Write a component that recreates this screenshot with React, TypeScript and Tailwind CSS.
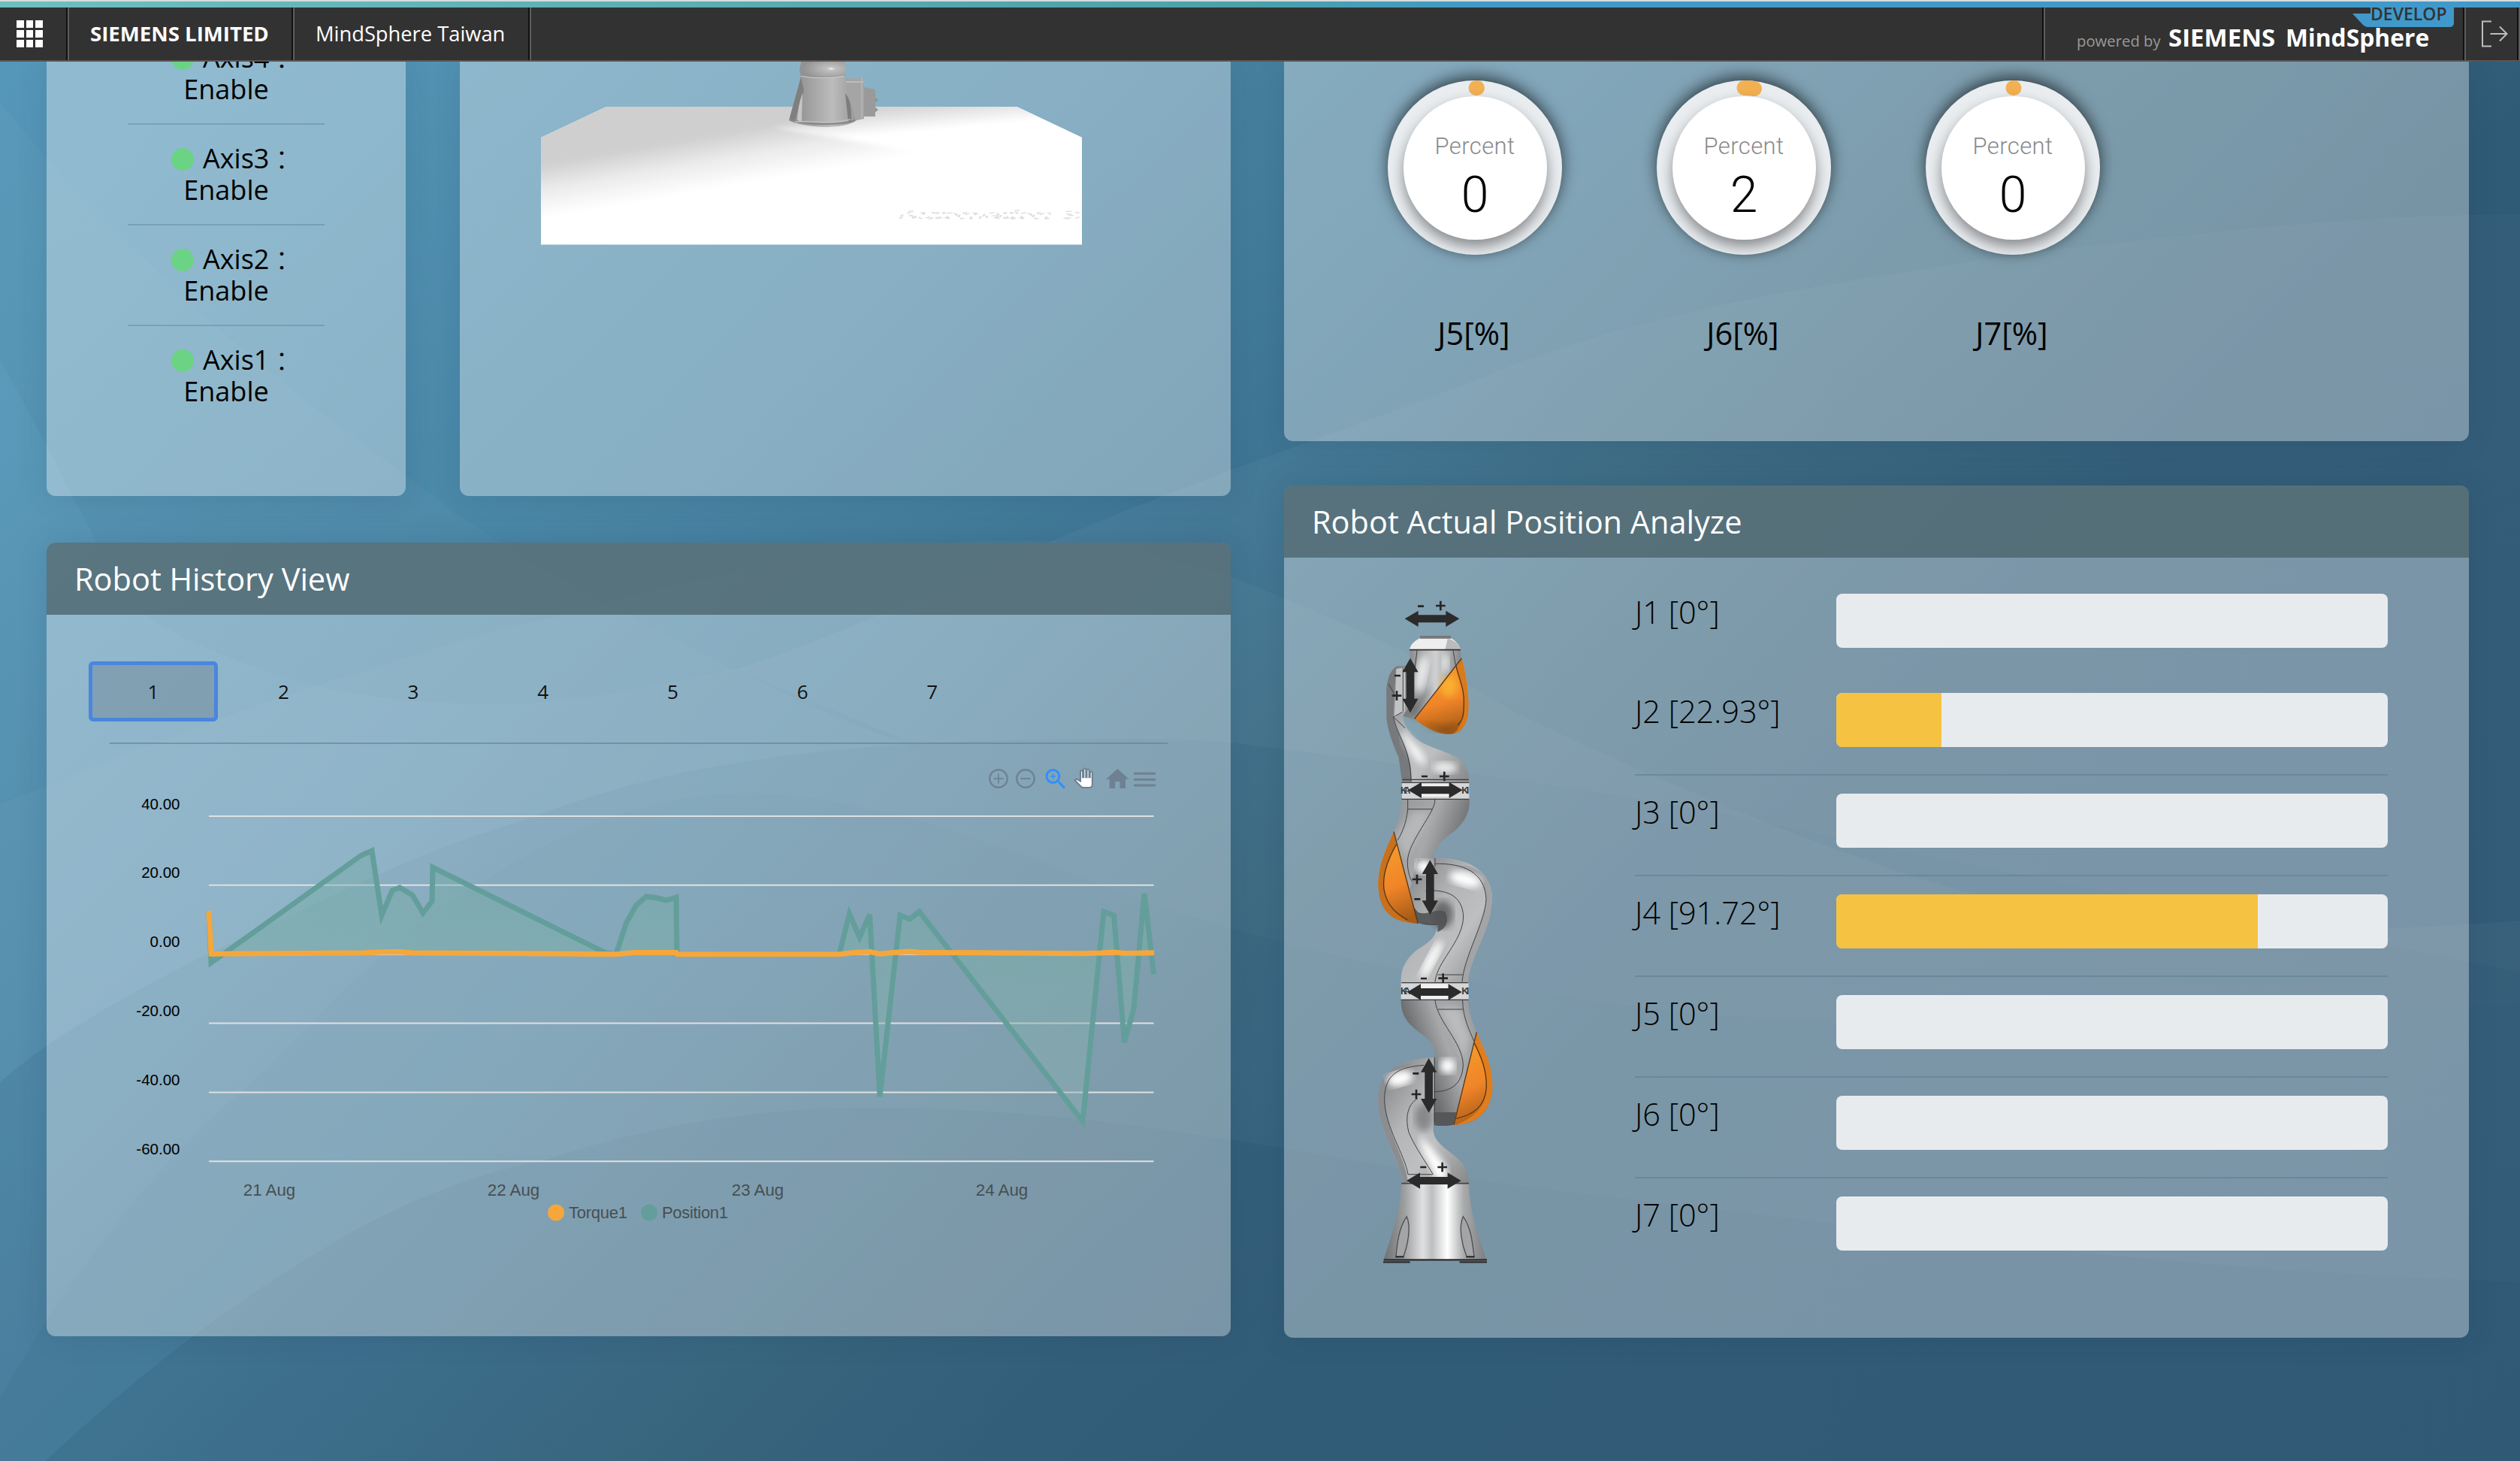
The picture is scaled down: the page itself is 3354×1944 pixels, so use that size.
import React from "react";

const SANS = "font-['Open_Sans','Noto_Sans',sans-serif]";

function Backdrop() {
  return (
    <svg className="absolute inset-0 h-full w-full" viewBox="0 0 3354 1944" preserveAspectRatio="none" aria-hidden="true">
      <defs>
        <linearGradient id="sky" gradientUnits="userSpaceOnUse" x1="0" y1="0" x2="2649" y2="2649">
          <stop offset="0" stopColor="#5b9dbf" />
          <stop offset="0.12" stopColor="#5696b7" />
          <stop offset="0.3" stopColor="#4b86a6" />
          <stop offset="0.43" stopColor="#417795" />
          <stop offset="0.55" stopColor="#38677f" />
          <stop offset="0.66" stopColor="#305b76" />
          <stop offset="1" stopColor="#2e5774" />
        </linearGradient>
      </defs>
      <rect width="3354" height="1944" fill="url(#sky)" />
      <path d="M0 480C50 560 150 780 193 818C240 850 290 870 366 897C470 930 560 937 682 937C820 930 920 900 978 890C1060 870 1300 760 1448 700C1640 620 1800 570 1979 500C2120 440 2300 400 2443 377C2600 350 2740 330 2820 323C3000 300 3200 285 3354 285V0H0Z" fill="#22607f" fillOpacity="0.08" />
      <path d="M0 135C60 215 200 360 290 436C420 550 520 615 603 680C700 750 780 790 835 818C920 860 1100 960 1233 997L1400 1052L1637 1135C1750 1170 1820 1190 1898 1209C2000 1235 2080 1250 2148 1264C2400 1310 2900 1365 3354 1335V1944H0Z" fill="#fff" fillOpacity="0.025" />
      <path d="M978 890C1060 870 1300 760 1448 700C1640 620 1800 570 1979 500C2120 440 2300 400 2443 377C2600 350 2740 330 2820 323C3000 300 3200 285 3354 285V1335C2900 1365 2400 1310 2148 1264C2080 1250 2000 1235 1898 1209C1820 1190 1750 1170 1637 1135L1400 1052L1233 997Z" fill="#fff" fillOpacity="0.025" />
      <path d="M0 1070C180 1000 300 950 437 907C560 870 640 840 754 818C950 760 1150 719 1366 719C1470 722 1550 740 1637 767C1824 841 1900 880 2023 951C2272 1071 2521 1163 2628 1190C2850 1240 3000 1250 3354 1225V1944H0Z" fill="#fff" fillOpacity="0.03" />
      <path d="M0 1440C80 1370 180 1320 264 1275C450 1190 560 1130 693 1093C880 1020 1080 983 1489 983C1540 983 1590 984 1637 988C1824 1011 2140 1051 2322 1089C2700 1170 3000 1220 3354 1294V1944H0Z" fill="#1e4f70" fillOpacity="0.12" />
      <path d="M0 1860C80 1720 190 1560 335 1441C430 1350 530 1230 631 1180C740 1110 860 1055 999 1055C1140 1060 1300 1110 1437 1167C1560 1215 1680 1250 1780 1272C1880 1295 1960 1307 2060 1323C2400 1380 2900 1375 3354 1335V1944H0Z" fill="#1e4f70" fillOpacity="0.07" />
      <path d="M60 1944C250 1770 350 1710 468 1639C560 1590 640 1560 723 1544C860 1500 1000 1474 1152 1474C1350 1474 1500 1495 1660 1520L1836 1550C2050 1585 2250 1605 2444 1628C2750 1670 3050 1695 3354 1706V1944Z" fill="#1c4865" fillOpacity="0.13" />
    </svg>
  );
}

function AppHeader() {
  const divider = "h-full w-1 shrink-0 border-l-2 border-r-2 border-l-[#111] border-r-[#5c5c5c]";
  return (
    <header className={`relative z-10 h-[82px] ${SANS}`}>
      <div className="h-[2px] bg-[#d8dcdc]" />
      <div className="h-2 bg-linear-to-r from-[#6cc0c0] via-[#4ba0aa] to-[#3f99cb] to-60%" />
      <div className="flex h-[72px] items-stretch border-b-2 border-[#5a5552] bg-[#323232] text-white">
        <div className="flex w-[88px] items-center pl-[22px]">
          <div className="grid grid-cols-3 gap-[3px] gap-y-[3.5px]">
            {Array.from({ length: 9 }, (_, i) => (
              <span key={i} className="h-[9.5px] w-[9.7px] bg-white" />
            ))}
          </div>
        </div>
        <div className={divider} />
        <div className="flex w-[296px] items-center pl-[28px] text-[27.6px] font-bold whitespace-nowrap">SIEMENS LIMITED</div>
        <div className={divider} />
        <div className="flex w-[311px] items-center pl-[28px] text-[27.3px] whitespace-nowrap">MindSphere Taiwan</div>
        <div className={divider} />
        <div className="flex-1" />
        <div className={divider} />
        <div className="relative flex w-[556px] items-baseline pl-[42px] whitespace-nowrap">
          <span className="w-[122px] text-[20.3px] leading-[88px] text-[#999]">powered by</span>
          <span className="w-[156px] text-[33px] leading-[76px] font-bold">SIEMENS</span>
          <span className="text-[31.8px] leading-[76px] font-bold">MindSphere</span>
          <svg className="absolute top-[-2px] left-[409px] h-[28px] w-[135px]" viewBox="0 0 135 28">
            <path d="M24 0H135V22Q135 28 129 28H21Q16 28 12 23L0 10H24Z" fill="#4099ca" />
          </svg>
          <span className="absolute top-[-7px] left-[433px] text-[23px] leading-[30px] font-semibold text-[#323232]">DEVELOP</span>
        </div>
        <div className={divider} />
        <div className="flex w-[68px] items-center pl-[20px]">
          <svg className="h-[36px] w-[37px]" viewBox="0 0 37 36" fill="none" stroke="#bdbdbd" strokeWidth="2">
            <path d="M14 1.500H2V34.500H14M12.500 18H34M25 8.500L34.500 18L25 27.500" />
          </svg>
        </div>
        <div className={divider} />
      </div>
    </header>
  );
}

function AxisList() {
  return (
    <ul className={`mx-[108px] flex flex-col text-[36px] leading-[42px] text-black ${SANS}`}>
      {[4, 3, 2, 1].map((n) => (
        <li key={n} className="border-b-2 border-[#5f8299]/45 py-6 last:border-b-0">
          <div className="flex h-[42px] items-center pl-[58px]">
            <span className="mt-[2px] size-[30px] rounded-full bg-[#6bd384]" />
            <span className="ml-3 w-[87px] whitespace-nowrap">Axis{n}</span>
            <span className="font-['Noto_Sans_CJK_TC',sans-serif] text-[36px] leading-[42px] font-light">：</span>
          </div>
          <div className="text-center">Enable</div>
        </li>
      ))}
    </ul>
  );
}

function TableScene() {
  return (
    <svg className="ml-[108px] h-[244px] w-[720px]" viewBox="720 82 720 244">
      <defs>
        <linearGradient id="tl" gradientUnits="userSpaceOnUse" x1="850" y1="196" x2="862" y2="266">
          <stop offset="0" stopColor="#cfcfcf" />
          <stop offset="0.5" stopColor="#ececec" />
          <stop offset="1" stopColor="#fff" />
        </linearGradient>
        <linearGradient id="tr" gradientUnits="userSpaceOnUse" x1="1240" y1="140" x2="1243" y2="172">
          <stop offset="0" stopColor="#d6d6d6" />
          <stop offset="1" stopColor="#fff" />
        </linearGradient>
        <linearGradient id="cone" x1="0" x2="1" y1="0" y2="0">
          <stop offset="0" stopColor="#8a8a8a" />
          <stop offset="0.25" stopColor="#9c9c9c" />
          <stop offset="0.65" stopColor="#bcbcbc" />
          <stop offset="1" stopColor="#999" />
        </linearGradient>
        <radialGradient id="ball" cx="0.68" cy="0.45" r="0.6">
          <stop offset="0" stopColor="#f2f2f2" />
          <stop offset="0.15" stopColor="#c0c0c0" />
          <stop offset="1" stopColor="#929292" />
        </radialGradient>
        <clipPath id="tbl">
          <path d="M807 142H1353.500L1440 183V325H720V183Z" />
        </clipPath>
        <filter id="soft"><feGaussianBlur stdDeviation="3" /></filter>
      </defs>
      <path d="M807 142H1353.500L1440 183V325.500H720V183Z" fill="#fff" />
      <g clipPath="url(#tbl)">
        <path d="M1020 166L1060 130H1460V200L1200 200Z" fill="url(#tr)" filter="url(#soft)" />
        <path d="M700 300V120H1090V166L1030 168L1275 213L1004 240L860 275Z" fill="url(#tl)" filter="url(#soft)" />
        <text x="1195" y="291" fontSize="15" fontStyle="italic" textLength="243" lengthAdjust="spacingAndGlyphs" fill="none" stroke="#dadada" strokeWidth="0.9" strokeDasharray="3 5" fontFamily="Liberation Sans, sans-serif">Automation S</text>
      </g>
      <path d="M1124 104H1146L1150 106V158L1136 161L1124 160Z" fill="#a5a5a5" />
      <path d="M1124 109H1150" stroke="#c4c4c4" strokeWidth="1.500" />
      <path d="M1147 104V159" stroke="#b9b9b9" strokeWidth="1.500" />
      <path d="M1150 116L1165 119V155H1150Z" fill="#9a9a9a" />
      <path d="M1165 130l4 3-4 3zM1165 143l4 3-4 3z" fill="#909090" />
      <path d="M1067 80H1123L1126 92L1124 104Q1095 107 1066 104L1064 92Z" fill="url(#ball)" />
      <path d="M1066 101Q1095 106 1124 101L1139 161Q1125 169 1097 169Q1062 167 1050 160Z" fill="url(#cone)" />
      <path d="M1066 103L1051 158L1058 160L1070 120Z" fill="#7f7f7f" />
      <path d="M1068 124Q1062 140 1061 160L1067 162Z" fill="#c6c6c6" />
      <path d="M1125 124Q1134 134 1133 161L1129 162Z" fill="#7c7c7c" />
      <path d="M1066 101.500Q1095 106 1124 101.500" stroke="#cdcdcd" strokeWidth="1.200" fill="none" />
      <path d="M1051 159Q1070 165 1097 165Q1125 165 1138 160" stroke="#868686" strokeWidth="2" fill="none" />
      <path d="M1058 162Q1075 161.500 1097 162.500Q1120 162 1132 159" stroke="#bfbfbf" strokeWidth="1.500" fill="none" />
    </svg>
  );
}

function Gauge({ label, value, arc }: { label: string; value: number; arc: string }) {
  return (
    <div className="flex w-[358px] flex-col items-center">
      <div className="relative flex size-[232px] items-center justify-center rounded-full bg-[#e9edf0] shadow-[0_-5px_20px_rgba(0,0,0,0.62)]">
        <svg className="absolute inset-0 size-full" viewBox="-116 -116 232 232" fill="none">
          <path d={arc} stroke="#f2b052" strokeWidth="20" strokeLinecap="round" />
        </svg>
        <div className="relative flex size-[191px] flex-col items-center rounded-full bg-white font-['Roboto','Liberation_Sans',sans-serif] font-light shadow-[0_9px_18px_rgba(0,0,0,0.42)]">
          <span className="mt-[49px] text-[31px] leading-[36px] tracking-[0.4px] text-[#8a8a8a]">Percent</span>
          <span className="mt-[15px] text-[66px] leading-[64px] text-black">{value}</span>
        </div>
      </div>
      <div className={`mt-[75px] mr-[3px] text-[41.5px] leading-[58px] text-black ${SANS}`}>{label}</div>
    </div>
  );
}

function PanelTitle({ children }: { children: string }) {
  return (
    <h2 className={`flex h-24 items-center bg-[rgba(77,103,111,0.82)] pl-[37px] text-[41.5px] text-white ${SANS}`}>{children}</h2>
  );
}

function ChartToolbar() {
  const c = "#6e8192";
  return (
    <svg className="mt-[26px] ml-[1240px] h-[40px] w-[246px]" viewBox="1302 1016 246 40">
      <g transform="translate(1313.500 1020.500) scale(1.290)" fill={c}>
        <path d="M12.600 7h-1.300v4.400H7v1.300h4.300V17h1.300v-4.300H17v-1.300h-4.400V7zM12 2C6.480 2 2 6.480 2 12s4.480 10 10 10 10-4.480 10-10S17.520 2 12 2zm0 18.200c-4.500 0-8.200-3.700-8.200-8.200S7.500 3.800 12 3.800s8.200 3.700 8.200 8.200-3.700 8.200-8.200 8.200z" />
      </g>
      <g transform="translate(1349.500 1020.500) scale(1.290)" fill={c}>
        <path d="M7 11.300v1.400h10v-1.400H7zM12 2C6.480 2 2 6.480 2 12s4.480 10 10 10 10-4.480 10-10S17.520 2 12 2zm0 18.200c-4.500 0-8.200-3.700-8.200-8.200S7.500 3.800 12 3.800s8.200 3.700 8.200 8.200-3.700 8.200-8.200 8.200z" />
      </g>
      <g transform="translate(1387 1018.500) scale(1.520)" fill="#3090fa">
        <path d="M15.500 14h-.79l-.28-.27C15.410 12.590 16 11.110 16 9.500 16 5.910 13.090 3 9.500 3S3 5.910 3 9.500 5.910 16 9.500 16c1.610 0 3.090-.59 4.230-1.570l.27.28v.79l5 4.990L20.490 19l-4.990-5zm-6 0C7.010 14 5 11.990 5 9.500S7.010 5 9.500 5 14 7.010 14 9.500 11.990 14 9.500 14z" />
        <path d="M12 10h-2v2H9v-2H7V9h2V7h1v2h2v1z" />
      </g>
      <g transform="translate(1429.500 1022.500) scale(1.060)">
        <path fill="#fff" stroke={c} strokeWidth="2" d="M23 5.500V20c0 2.200-1.800 4-4 4h-7.300c-1.080 0-2.100-.43-2.850-1.190L1 14.830s1.260-1.230 1.300-1.250c.22-.19.49-.29.79-.29.22 0 .42.06.6.16.04.01 4.310 2.460 4.310 2.460V4c0-.83.67-1.500 1.500-1.500S11 3.170 11 4v7h1V1.500c0-.83.67-1.500 1.500-1.500S15 .67 15 1.500V11h1V2.500c0-.83.67-1.500 1.500-1.500s1.500.67 1.500 1.500V11h1V5.500c0-.83.67-1.500 1.500-1.500s1.500.67 1.500 1.500z" />
      </g>
      <g transform="translate(1469 1018.500) scale(1.530)" fill={c}>
        <path d="M10 20v-6h4v6h5v-8h3L12 3 2 12h3v8z" />
      </g>
      <path d="M1509 1029.300H1538M1509 1037.300H1538M1509 1045H1538" stroke={c} strokeWidth="3" />
    </svg>
  );
}

const POSITION =
  "278,1215 281,1281 481,1138 495,1132 508,1218 522,1185 532,1181 549,1191 563,1215 575,1199 576,1154 806,1268 820,1269.7 833.5,1228 846.5,1205 860,1193 873,1194.500 887,1198 900,1194 901,1269.7 1117,1269.7 1130.5,1216 1144,1247 1157.5,1217 1171,1459 1198,1218 1211,1223 1223.5,1213 1441,1492 1469,1213 1482.5,1218 1496.500,1387 1509,1342 1523,1189 1535.500,1296";
const TORQUE =
  "278,1212 281,1269.3 483,1268 507,1266.700 532,1266.500 550,1268 700,1268.700 820,1269.700 844,1267.500 900,1267.500 901,1269.700 1117,1269.700 1137,1267.500 1158,1266.500 1171,1269.200 1190,1267.500 1211,1266 1223,1267.300 1440,1268.800 1465,1268 1482,1267 1497,1268.600 1536,1267.800";

function HistoryChart() {
  return (
    <svg className="h-[600px] w-[1576px]" viewBox="62 1056 1576 600" fontFamily="'Liberation Sans', Arial, sans-serif">
      <defs>
        <linearGradient id="area" x1="0" x2="0" y1="0" y2="1">
          <stop offset="0" stopColor="#6fa8a2" stopOpacity="0.38" />
          <stop offset="0.4" stopColor="#7aaea6" stopOpacity="0.5" />
          <stop offset="1" stopColor="#8fb0b4" stopOpacity="0.4" />
        </linearGradient>
      </defs>
      {[40, 20, 0, -20, -40, -60].map((v, i) => (
        <g key={v}>
          <path d={`M278 ${1086 + i * 91.86}H1535.500`} stroke="#e0e0e0" strokeWidth="2" />
          <text x="239.500" y={1076.500 + i * 91.86} fontSize="20.500" textAnchor="end" fill="#000">{v.toFixed(2)}</text>
        </g>
      ))}
      <polygon points={`278,1269.700 ${POSITION} 1535.500,1269.700`} fill="url(#area)" />
      <polyline points={POSITION} fill="none" stroke="#639e9b" strokeWidth="7" />
      <polyline points={TORQUE} fill="none" stroke="#f5a73c" strokeWidth="7" />
      {[["21 Aug", 358.5], ["22 Aug", 683.5], ["23 Aug", 1008.5], ["24 Aug", 1333.5]].map(([t, x]) => (
        <text key={t} x={x} y="1590.500" fontSize="22.300" textAnchor="middle" fill="#474f53">{t}</text>
      ))}
      <circle cx="740" cy="1613.500" r="11" fill="#f5a73c" />
      <text x="757" y="1621" fontSize="22" textLength="78" fill="#474f53">Torque1</text>
      <circle cx="864" cy="1613.500" r="11" fill="#639e9b" />
      <text x="881" y="1621" fontSize="22" textLength="88" fill="#474f53">Position1</text>
    </svg>
  );
}

function HArrow({ x, y, w = 218 }: { x: number; y: number; w?: number }) {
  return (
    <path d={`M${x} ${y}l54-32v17h${w - 108}v-17l54 32l-54 32v-17h-${w - 108}v17z`} fill="#2b2b2b" />
  );
}
function VArrow({ x, y, h = 218 }: { x: number; y: number; h?: number }) {
  return (
    <path d={`M${x} ${y}l32 56h-16v${h - 112}h16l-32 56l-32-56h16v-${h - 112}h-16z`} fill="#2b2b2b" />
  );
}
function Signs({ minus, plus }: { minus: [number, number]; plus: [number, number] }) {
  return (
    <path d={`M${minus[0] - 12} ${minus[1]}h24M${plus[0] - 19} ${plus[1]}h38M${plus[0]} ${plus[1] - 19}v38`} stroke="#262626" strokeWidth="8" />
  );
}

function RobotArm() {
  const line = { fill: "none", stroke: "#3f4145", strokeWidth: 3 };
  return (
    <svg className="h-[950px] w-[280px]" viewBox="0 0 840 2850">
      <defs>
        <linearGradient id="m1" x1="0" x2="1" y1="0" y2="0">
          <stop offset="0" stopColor="#77797b" />
          <stop offset="0.3" stopColor="#a8aaac" />
          <stop offset="0.55" stopColor="#cfd0d1" />
          <stop offset="1" stopColor="#85878a" />
        </linearGradient>
        <linearGradient id="m2" x1="0" x2="1" y1="0" y2="1">
          <stop offset="0" stopColor="#787a7c" />
          <stop offset="0.4" stopColor="#b4b5b7" />
          <stop offset="0.65" stopColor="#bebfc0" />
          <stop offset="1" stopColor="#858789" />
        </linearGradient>
        <linearGradient id="m3" x1="0" x2="1" y1="0" y2="0.6">
          <stop offset="0" stopColor="#949698" />
          <stop offset="0.45" stopColor="#a6a8aa" />
          <stop offset="0.75" stopColor="#77797b" />
          <stop offset="1" stopColor="#5a5c5e" />
        </linearGradient>
        <linearGradient id="m4" x1="1" x2="0" y1="0" y2="0.6">
          <stop offset="0" stopColor="#989a9c" />
          <stop offset="0.45" stopColor="#a6a8aa" />
          <stop offset="0.75" stopColor="#6c6e70" />
          <stop offset="1" stopColor="#606264" />
        </linearGradient>
        <linearGradient id="base" x1="0" x2="1" y1="0" y2="0">
          <stop offset="0" stopColor="#6e7072" />
          <stop offset="0.2" stopColor="#9c9ea0" />
          <stop offset="0.38" stopColor="#e0e0e1" />
          <stop offset="0.47" stopColor="#bcbebf" />
          <stop offset="0.62" stopColor="#ffffff" />
          <stop offset="0.78" stopColor="#a8aaab" />
          <stop offset="1" stopColor="#7b7d7f" />
        </linearGradient>
        <linearGradient id="or" x1="0.3" x2="0.5" y1="0" y2="1">
          <stop offset="0" stopColor="#f6a12b" />
          <stop offset="0.6" stopColor="#f08528" />
          <stop offset="1" stopColor="#a85c17" />
        </linearGradient>
        <filter id="b12"><feGaussianBlur stdDeviation="14" /></filter>
      </defs>

      {/* wrist */}
      <path d="M245 378C215 385 197 430 196 480V590C205 650 225 700 245 745C255 780 262 810 258 842H524C528 790 505 760 470 740C420 712 350 700 310 665C285 640 262 610 262 578L290 560V378Z" fill="url(#m2)" />
      <path d="M245 378C215 385 197 430 196 480V590C205 650 225 700 245 745L258 842H295C298 780 285 730 262 680C240 640 225 610 224 580L232 400Z" fill="#77797c" />
      <path d="M235 390L270 385V560L240 572L228 590Z" fill="#c2c3c4" />
      <path d="M258 650L270 640C290 680 360 720 350 770C320 775 280 720 258 650Z" fill="#fff" opacity="0.85" filter="url(#b12)" />
      <ellipse cx="430" cy="785" rx="48" ry="22" fill="#fff" opacity="0.8" filter="url(#b12)" />
      <path d="M205 450L232 500M224 582L260 562M224 582L270 626M224 582C235 650 295 710 294 842M262 385V560" {...line} />
      <path d="M290 314H490L496 350L310 592L262 578L288 540Z" fill="url(#m1)" />
      <path d="M270 560L380 455L315 590Z" fill="#606264" filter="url(#b12)" opacity="0.7" />
      <ellipse cx="335" cy="410" rx="22" ry="75" transform="rotate(12 335 410)" fill="#fff" opacity="0.75" filter="url(#b12)" />
      <ellipse cx="432" cy="365" rx="14" ry="38" fill="#fff" opacity="0.7" filter="url(#b12)" />
      <path d="M318 316L308 400M462 316L472 375" {...line} />
      <path d="M331 268H453C470 275 488 295 492 314H288C290 295 310 275 331 268Z" fill="#eeeeee" />
      <path d="M440 270C470 275 488 295 492 314H430Z" fill="#b9bbbc" />
      <path d="M330 258H453V269H330Z" fill="#777" />
      <path d="M288 314H492" stroke="#333" strokeWidth="5" />
      <path d="M496 348C512 400 530 510 521 575C512 625 480 652 440 651C390 648 330 610 308 590Z" fill="url(#or)" />
      <path d="M496 348C512 400 530 510 521 575C512 625 490 640 465 648C500 615 512 560 505 500C500 460 480 410 474 378Z" fill="#d97a1c" />
      <path d="M340 600C380 620 430 630 485 610C465 650 420 660 340 600Z" fill="#6d3f12" opacity="0.7" filter="url(#b12)" />
      <ellipse cx="445" cy="460" rx="35" ry="42" fill="#fbb832" opacity="0.8" filter="url(#b12)" />
      <path d="M496 348L308 590M474 378C485 430 508 470 505 530C505 590 495 600 480 615" fill="none" stroke="#5a3714" strokeWidth="4" />

      {/* upper collar */}
      <path d="M258 910H527C530 960 510 1000 470 1035C430 1065 380 1100 385 1150C380 1250 440 1300 400 1412C370 1415 340 1412 320 1405L225 1040C245 1000 258 950 258 910Z" fill="url(#m3)" />
      <path d="M300 960H370C350 1040 300 1090 275 1150C260 1120 245 1100 232 1060Z" fill="#c5c6c7" opacity="0.6" filter="url(#b12)" />
      <rect x="258" y="842" width="268" height="68" fill="#d5d6d7" />
      <path d="M260 832H524M256 844H526M256 910H526" stroke="#3a3a3a" strokeWidth="4" />
      <path d="M281 912V950H378M389 912C395 960 280 1080 280 1160C280 1230 310 1270 352 1276M281 950C275 1010 255 1050 240 1075" {...line} />

      {/* second link */}
      <path d="M385 1145C480 1140 610 1170 618 1300C615 1360 605 1400 598 1414C570 1500 525 1570 522 1642H254C252 1590 270 1550 320 1510C370 1480 395 1460 400 1410L320 1400L290 1270L320 1150Z" fill="url(#m2)" />
      <path d="M618 1300C615 1360 605 1400 598 1414C570 1500 525 1570 522 1642H498C505 1540 590 1400 594 1310C590 1230 540 1190 480 1175C560 1170 615 1220 618 1300Z" fill="#a2a4a6" />
      <path d="M320 1360C350 1380 400 1340 430 1360C450 1400 430 1430 400 1440V1412C370 1415 340 1412 320 1400L305 1340Z" fill="#4a4c4e" opacity="0.85" />
      <ellipse cx="420" cy="1370" rx="42" ry="55" fill="#4f5153" opacity="0.75" filter="url(#b12)" />
      <ellipse cx="345" cy="1180" rx="32" ry="28" fill="#fff" filter="url(#b12)" />
      <ellipse cx="510" cy="1230" rx="64" ry="28" transform="rotate(15 510 1230)" fill="#fff" filter="url(#b12)" />
      <ellipse cx="375" cy="1550" rx="20" ry="85" transform="rotate(28 375 1550)" fill="#fff" opacity="0.95" filter="url(#b12)" />
      <path d="M390 1145V1180M390 1168C500 1165 590 1200 594 1310C590 1400 505 1540 498 1640M352 1276C430 1270 500 1290 503 1380C500 1480 395 1560 390 1640M400 1611H500" {...line} />
      <path d="M225 1040L322 1407C250 1400 165 1370 163 1250C165 1160 200 1100 225 1040Z" fill="url(#or)" />
      <path d="M225 1040L236 1090C200 1150 180 1210 186 1270C195 1340 230 1370 290 1403C220 1395 165 1360 163 1250C165 1160 200 1100 225 1040Z" fill="#c8701b" />
      <path d="M225 1040L322 1407M236 1090C195 1160 180 1220 186 1270C198 1340 240 1370 280 1392" fill="none" stroke="#5a3714" strokeWidth="4" />

      {/* lower collar */}
      <path d="M254 1710H522C524 1760 540 1800 556 1840L463 2210C430 2216 400 2214 382 2210V1980C405 1910 380 1880 340 1850C290 1815 252 1780 254 1710Z" fill="url(#m4)" />
      <path d="M410 1740H490L530 1860L505 1960C480 1870 430 1800 410 1740Z" fill="#c5c6c7" opacity="0.7" filter="url(#b12)" />
      <rect x="254" y="1643" width="270" height="68" fill="#d5d6d7" />
      <path d="M256 1643H522M254 1711H524" stroke="#3a3a3a" strokeWidth="4" />
      <path d="M390 1713C400 1800 500 1880 502 1970C500 2050 450 2078 385 2078M500 1713C500 1780 530 1840 545 1875M402 1749H500" {...line} />
      <path d="M386 2160H475L463 2210C430 2216 400 2214 382 2210Z" fill="#55575a" />
      <ellipse cx="440" cy="1975" rx="30" ry="30" fill="#fff" filter="url(#b12)" />
      <path d="M556 1840C575 1900 618 1950 619 2060C615 2150 560 2210 463 2210Z" fill="url(#or)" />
      <path d="M556 1840C575 1900 618 1950 619 2060C615 2150 560 2205 475 2210C560 2175 596 2130 595 2050C592 1990 570 1930 546 1882Z" fill="#e07d1c" />
      <path d="M556 1840L465 2210M546 1882C575 1940 596 1990 595 2060C590 2140 540 2170 475 2185" fill="none" stroke="#5a3714" strokeWidth="4" />

      {/* lowest link */}
      <path d="M400 1940C300 1945 170 1960 163 2110C165 2240 245 2340 262 2444H524C528 2380 490 2350 450 2320C400 2280 375 2260 385 2205V1940Z" fill="url(#m2)" />
      <path d="M163 2110C165 2240 245 2340 262 2444H282C275 2340 190 2240 188 2100C190 2010 250 1980 310 1965C220 1970 165 2010 163 2110Z" fill="#8b8d8f" />
      <ellipse cx="250" cy="2025" rx="52" ry="30" transform="rotate(-15 250 2025)" fill="#fff" filter="url(#b12)" />
      <ellipse cx="345" cy="2180" rx="36" ry="55" fill="#737577" opacity="0.7" filter="url(#b12)" />
      <path d="M330 2250C370 2310 450 2360 440 2430H390C370 2360 330 2310 330 2250Z" fill="#fff" filter="url(#b12)" />
      <path d="M388 1940V2200M345 1972C240 1980 188 2010 188 2110C190 2220 270 2330 282 2408H380M320 2105C280 2130 270 2180 285 2240C310 2300 360 2370 382 2408" {...line} />
      <path d="M256 2444H525C530 2570 560 2640 595 2748H185C220 2640 250 2560 256 2444Z" fill="url(#base)" />
      <path d="M256 2444H525" stroke="#444" strokeWidth="5" />
      <path d="M277 2576C245 2620 238 2690 234 2735H264C280 2690 296 2620 277 2576ZM502 2576C482 2620 498 2690 516 2735H546C540 2690 535 2620 502 2576Z" fill="#a3a5a6" stroke="#4d4f51" strokeWidth="4" />
      <path d="M232 2737H266M514 2737H548" stroke="#333" strokeWidth="7" />
      <path d="M185 2749H597M183 2758H290M488 2758H597" stroke="#2c2c2c" strokeWidth="7" />

      <g fontFamily="Liberation Sans, sans-serif" fontSize="38" fontWeight="700" fill="#3a3a3a">
        <text x="252" y="888" textLength="40">KA</text>
        <text x="496" y="888" textLength="30">KI</text>
        <text x="252" y="1690" textLength="40">KA</text>
        <text x="496" y="1690" textLength="30">KI</text>
      </g>
      <path d="M330 850H445V900H330ZM332 1648H442V1708H332Z" fill="#f1f1f1" />
      <HArrow x={269} y={190} />
      <VArrow x={291} y={347} />
      <HArrow x={282} y={874} />
      <VArrow x={370} y={1153} />
      <HArrow x={279} y={1680} />
      <VArrow x={365} y={1944} />
      <HArrow x={276} y={2433} />
      <Signs minus={[333, 140]} plus={[412, 138]} />
      <Signs minus={[240, 417]} plus={[237, 497]} />
      <Signs minus={[348, 819]} plus={[427, 819]} />
      <Signs minus={[319, 1309]} plus={[318, 1230]} />
      <Signs minus={[345, 1626]} plus={[422, 1625]} />
      <Signs minus={[313, 2005]} plus={[315, 2088]} />
      <Signs minus={[343, 2379]} plus={[419, 2379]} />
    </svg>
  );
}

const JOINTS = [
  { name: "J1 [0°]", pct: 0 },
  { name: "J2 [22.93°]", pct: 19.1 },
  { name: "J3 [0°]", pct: 0 },
  { name: "J4 [91.72°]", pct: 76.4 },
  { name: "J5 [0°]", pct: 0 },
  { name: "J6 [0°]", pct: 0 },
  { name: "J7 [0°]", pct: 0 },
];

const GLASS = "overflow-hidden bg-white/35";
const SHADOW = "shadow-[0_0_40px_rgba(10,40,70,0.12)]";

export default function App() {
  return (
    <div className="relative h-[1944px] w-full overflow-hidden bg-[#3f7290]">
      <Backdrop />
      <AppHeader />
      <main className="relative flex h-[1862px] gap-[71px] pr-[68px] pl-[62px]">
        <div className="flex w-[1576px] flex-col gap-[62px]">
          <div className="flex h-[578px] gap-[72px]">
            <section className={`flex w-[478px] flex-col justify-end rounded-b-xl pb-[94px] ${GLASS} ${SHADOW}`}>
              <AxisList />
            </section>
            <section className={`w-[1026px] rounded-b-xl ${GLASS} ${SHADOW}`}>
              <TableScene />
            </section>
          </div>
          <section className={`h-[1056px] rounded-xl ${GLASS} ${SHADOW}`}>
            <PanelTitle>Robot History View</PanelTitle>
            <div className={`mt-[62px] ml-[56px] flex text-[26px] text-[#111] ${SANS}`}>
              {[1, 2, 3, 4, 5, 6, 7].map((n) => (
                <button
                  key={n}
                  className={
                    n === 1
                      ? "mr-[1px] h-[80px] w-[172px] rounded-md border-[5px] border-[#4a86de] bg-[#6f8694]/45"
                      : "h-[80px] w-[172.7px]"
                  }
                >
                  {n}
                </button>
              ))}
            </div>
            <div className="mt-[28px] ml-[84px] h-[2px] w-[1408px] bg-[#5f7f92]/60" />
            <div className="flex flex-col">
              <ChartToolbar />
              <HistoryChart />
            </div>
          </section>
        </div>

        <div className="flex w-[1577px] flex-col gap-[59px]">
          <section className={`flex h-[505px] rounded-b-xl pt-[25px] pl-[75px] ${GLASS} ${SHADOW}`}>
            <Gauge label="J5[%]" value={0} arc="M1.500 -106L3 -106" />
            <Gauge label="J6[%]" value={2} arc="M0.500 -106A106 106 0 0 1 14 -105" />
            <Gauge label="J7[%]" value={0} arc="M0.500 -106L1.500 -106" />
          </section>
          <section className={`h-[1134px] rounded-xl ${GLASS} ${SHADOW}`}>
            <PanelTitle>Robot Actual Position Analyze</PanelTitle>
            <div className="flex">
              <div className="mt-[18px] ml-[71px]">
                <RobotArm />
              </div>
              <ul className={`mt-[24px] ml-[116px] w-[1002px] ${SANS}`}>
                {JOINTS.map((j, i) => (
                  <li
                    key={j.name}
                    className={
                      i === 0
                        ? "flex pt-6 pb-9"
                        : "flex border-b-2 border-[#5f7f92]/60 pt-6 pb-9 last:border-b-0"
                    }
                  >
                    <span className="w-[268px] text-[41.5px] leading-[49px] font-light whitespace-nowrap text-black">{j.name}</span>
                    <div className="h-[72px] w-[734px] overflow-hidden rounded-lg bg-[#e8ebee]">
                      <div className="h-full bg-[#f5c242]" style={{ width: `${j.pct}%` }} />
                    </div>
                  </li>
                ))}
              </ul>
            </div>
          </section>
        </div>
      </main>
    </div>
  );
}
